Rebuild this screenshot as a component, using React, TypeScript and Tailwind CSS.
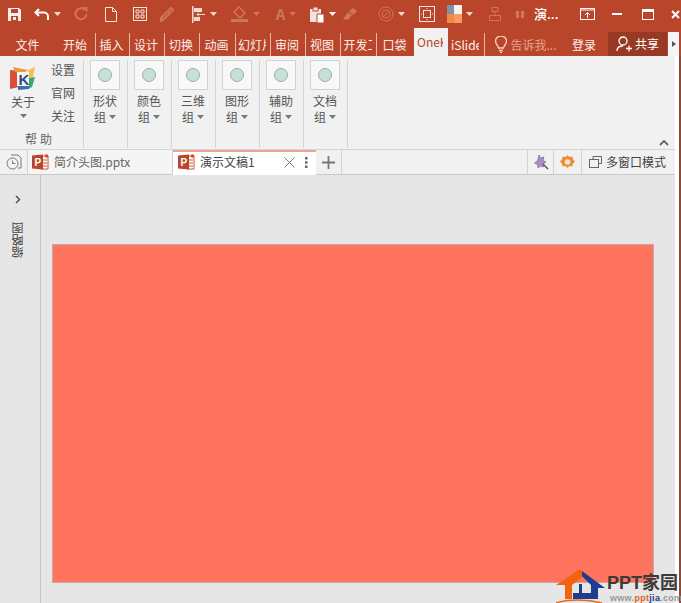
import React from "react";

const font = { fontFamily: '"Microsoft YaHei","Noto Sans CJK SC","Liberation Sans",sans-serif' };

function Caret({ c = "#f3d9d0" }: { c?: string }) {
  return (
    <svg width="7" height="4" viewBox="0 0 7 4" className="shrink-0"><path d="M0 0h7L3.5 4z" fill={c} /></svg>
  );
}

function Cell({ w, children, className = "" }: { w: string; children?: React.ReactNode; className?: string }) {
  return <div className={`flex items-center justify-center gap-1 shrink-0 ${w} ${className}`}>{children}</div>;
}

function TopBar() {
  const dim = "#d0745c";
  return (
    <div className="flex h-[28px] items-center bg-[#b9462b] shrink-0">
      <Cell w="w-[28px]">
        <svg width="15" height="15" viewBox="0 0 15 15"><path d="M1 1h11l2 2v11H1z" fill="#fbeee9" /><path d="M4 2h7v4H4zM4 9h7v5H4z" fill="#b9462b" /><path d="M6 10h3v3H6z" fill="#fbeee9" /></svg>
      </Cell>
      <Cell w="w-[38px]">
        <svg width="16" height="13" viewBox="0 0 16 13" fill="none" stroke="#fff" strokeWidth="2"><path d="M5 1 1.5 4.5 5 8M2 4.5h8a4 4 0 0 1 4 4V12" /></svg>
        <Caret />
      </Cell>
      <Cell w="w-[30px]">
        <svg width="14" height="14" viewBox="0 0 14 14" fill="none" stroke={dim} strokeWidth="2"><path d="M11 3a5.5 5.5 0 1 0 1.5 4M9 1h3.500v3.500" /></svg>
      </Cell>
      <Cell w="w-[30px]">
        <svg width="12" height="15" viewBox="0 0 12 15" fill="none" stroke="#f9e3dc"><path d="M.5.500h7l4 4v10H.5zM7.500.500v4h4" /></svg>
      </Cell>
      <Cell w="w-[28px]">
        <svg width="14" height="14" viewBox="0 0 14 14" fill="none" stroke="#f9e3dc"><rect x=".5" y=".5" width="13" height="13" /><path d="M3 3h3v3H3zM8 3h3v3H8zM3 8h3v3H3zM8 8h3v3H8z" /></svg>
      </Cell>
      <Cell w="w-[26px]">
        <svg width="14" height="15" viewBox="0 0 14 15" fill="none" stroke={dim} strokeWidth="2"><path d="M1 14l2-1 7-7-2-2-7 7zM9 3l2-2 2 2-2 2" /></svg>
      </Cell>
      <Cell w="w-[47px]">
        <svg width="15" height="17" viewBox="0 0 15 17"><path d="M1 0h1.500v17H1z" fill="#f3d9d0" /><path d="M3 2h8v4H3zM3 11h6v4H3z" fill="#f3d9d0" /><path d="M14 8.500H6M8 6.500l-2 2 2 2" stroke="#f3d9d0" fill="none" /></svg>
        <Caret />
      </Cell>
      <Cell w="w-[36px]">
        <svg width="19" height="16" viewBox="0 0 19 16"><path d="M9 1l6 6-5 5-6-6z" fill="none" stroke={dim} strokeWidth="1.500" /><path d="M1 13h17v3H1z" fill={dim} /></svg>
        <Caret c={dim} />
      </Cell>
      <Cell w="w-[46px]">
        <span className="text-[15px] text-[#d0745c] font-bold">A</span>
        <Caret c={dim} />
      </Cell>
      <Cell w="w-[27px]">
        <svg width="16" height="17" viewBox="0 0 16 17"><path d="M1 3h11v13H1z" fill="#f3e2dc" /><path d="M4 1h5v4H4z" fill="#f3e2dc" stroke="#b9462b" /><path d="M8 8h7v9H8z" fill="#fff" stroke="#b9462b" /></svg>
        <Caret c="#fff" />
      </Cell>
      <Cell w="w-[28px]">
        <svg width="16" height="14" viewBox="0 0 16 14"><path d="M1 12l5-7 4 3-4 5zM7 4l4-3 4 3-4 4z" fill={dim} /></svg>
      </Cell>
      <Cell w="w-[54px]">
        <svg width="16" height="16" viewBox="0 0 16 16" fill="none" stroke={dim}><circle cx="8" cy="8" r="7" /><circle cx="8" cy="8" r="4" /><path d="M5 11l6-6" /></svg>
        <Caret />
      </Cell>
      <Cell w="w-[18px]">
        <svg width="16" height="16" viewBox="0 0 16 16" fill="none" stroke="#f9e3dc"><rect x=".5" y=".5" width="15" height="15" /><rect x="4.500" y="4.500" width="7" height="7" /><path d="M8 2v1M8 13v1M2 8h1M13 8h1" /></svg>
      </Cell>
      <Cell w="w-[48px]">
        <svg width="15" height="18" viewBox="0 0 15 18"><path d="M0 0h7v9H0z" fill="#7d92a6" /><path d="M7 0h8v9H7z" fill="#f3f3f3" /><path d="M0 9h7v9H0z" fill="#f08a4b" /><path d="M7 9h8v9H7z" fill="#f79a5e" /></svg>
        <Caret />
      </Cell>
      <Cell w="w-[22px]">
        <svg width="12" height="14" viewBox="0 0 12 14" fill="none" stroke={dim}><path d="M3 .500h6v4H3zM.5 8.500h11v5H.5zM6 4v4" /></svg>
      </Cell>
      <Cell w="w-[28px]">
        <svg width="8" height="7" viewBox="0 0 8 7"><path d="M0 0h3v7H0zM5 0h3v7H5z" fill={dim} /></svg>
      </Cell>
      <Cell w="w-[38px]" className="justify-start! text-[13px] text-white font-medium">演...</Cell>
      <Cell w="w-[30px]">
        <svg width="15" height="12" viewBox="0 0 15 12" fill="none" stroke="#fff"><rect x=".5" y=".5" width="14" height="11" /><path d="M1 2h13M7.500 10V5M5 7l2.500-2.500L10 7" /></svg>
      </Cell>
      <Cell w="w-[30px]"><div className="h-[2px] w-[10px] bg-white" /></Cell>
      <Cell w="w-[32px]">
        <div className="h-[11px] w-[12px] border border-t-[3px] border-white" />
      </Cell>
      <Cell w="w-[22px]">
        <svg width="9" height="9" viewBox="0 0 9 9" stroke="#fff" strokeWidth="2"><path d="M1 1l7 7M8 1L1 8" /></svg>
      </Cell>
    </div>
  );
}

function TabItem({ w, label, sep = true, clip = false }: { w: string; label: string; sep?: boolean; clip?: boolean }) {
  return (
    <div className={`flex items-center justify-center pr-[2px] h-[23px] shrink-0 whitespace-nowrap text-[12px] text-[#fdf1ec] ${w} ${sep ? "border-r border-[#eab9a9]" : ""}`}>
      {clip ? <div className="w-[28px] overflow-hidden">{label}</div> : label}
    </div>
  );
}

function TabsRow() {
  return (
    <div className="flex h-[28px] items-end bg-[#b9462b] shrink-0">
      <TabItem w="w-[57px]" label="文件" sep={false} />
      <TabItem w="w-[39px]" label="开始" />
      <TabItem w="w-[34px]" label="插入" />
      <TabItem w="w-[35px]" label="设计" />
      <TabItem w="w-[35px]" label="切换" />
      <TabItem w="w-[36px]" label="动画" />
      <TabItem w="w-[35px]" label="幻灯片放映" clip />
      <TabItem w="w-[35px]" label="审阅" />
      <TabItem w="w-[35px]" label="视图" />
      <TabItem w="w-[36px]" label="开发工具" clip />
      <TabItem w="w-[37px]" label="口袋" sep={false} />
      <div className="flex h-[28px] w-[34px] shrink-0 items-center bg-[#f1f1f1] pl-[3px] text-[12px] text-[#b9462b]">
        <div className="w-[26px] overflow-hidden whitespace-nowrap">OneKey</div>
      </div>
      <TabItem w="w-[37px]" label="iSlide" clip />
      <div className="flex h-[23px] w-[82px] items-center justify-center gap-[3px] shrink-0 text-[12px] text-[#e6a48e]">
        <svg width="12" height="17" viewBox="0 0 12 17" fill="none" stroke="#f6d3c6" strokeWidth="1.300"><path d="M3.500 12c0-2-3-3.500-3-7a5.500 5 0 0 1 11 0c0 3.500-3 5-3 7zM4 14.500h4M5 16.300h2" /></svg>
        告诉我...
      </div>
      <div className="flex h-[23px] w-[34px] items-center justify-center text-[12px] text-[#fdf1ec] shrink-0">登录</div>
      <div className="ml-[7px] flex h-[24px] w-[59px] shrink-0 items-center justify-center gap-[3px] bg-[#983a23] text-[12px] text-white">
        <svg width="16" height="16" viewBox="0 0 16 16" fill="none" stroke="#fff" strokeWidth="1.300"><circle cx="7" cy="5" r="4" /><path d="M1 15c0-3 2-5 6-5M10 12.500h6M13 9.500v6" /></svg>
        共享
      </div>
      <div className="ml-[1px] flex h-[24px] w-[11px] shrink-0 items-center justify-center bg-[#f5f5f5]">
        <svg width="4" height="6" viewBox="0 0 4 6"><path d="M0 0l4 3-4 3z" fill="#555" /></svg>
      </div>
    </div>
  );
}

function RibbonGroup({ a, b }: { a: string; b: string }) {
  return (
    <div className="flex w-[44px] shrink-0 flex-col items-center border-r border-[#d4d4d4] pr-[1px] h-[88px] text-[12px] leading-[15px] text-[#555]">
      <div className="flex h-[30px] w-[30px] items-center justify-center border border-[#d2d2d2] bg-[#f8f8f8]">
        <div className="h-[14px] w-[14px] rounded-full border border-[#8fb3a5] bg-[#c9e0d6]" />
      </div>
      <div className="mt-[3px]">{a}</div>
      <div className="flex items-center gap-[3px] mt-[1px]">{b}<Caret c="#777" /></div>
    </div>
  );
}

function Ribbon() {
  return (
    <div className="flex h-[94px] shrink-0 bg-[#f1f1f1] pt-[4px] border-b border-[#d6d6d6]">
      <div className="flex w-[84px] shrink-0 flex-col border-r border-[#d4d4d4] h-[88px] text-[12px] text-[#555]">
        <div className="flex h-[69px]">
          <div className="flex w-[46px] flex-col items-center">
            <svg width="28" height="24" viewBox="0 0 28 24" className="mt-[6px]">
              <path d="M1 4l10 1-1 16-9 2z" fill="#d9503a" />
              <path d="M4 1l15 3-4 3-9-1z" fill="#ef9a3a" />
              <path d="M19 4l7-3-2 10-4 1z" fill="#f2c14e" />
              <path d="M20 12l6-1-3 10-4 2z" fill="#3aa76d" />
              <path d="M9 20l11-1 0 4-11 1z" fill="#3b6fb5" />
              <path d="M8 6h12v14H8z" fill="#f4f4f4" />
              <text x="9.500" y="18.500" fontSize="15" fontWeight="700" fill="#2f4b7c" style={{ fontFamily: '"Liberation Sans",sans-serif' }}>K</text>
            </svg>
            <div className="mt-[5px] leading-[14px]">关于</div>
            <div className="mt-[5px]"><Caret c="#777" /></div>
          </div>
          <div className="ml-[5px] flex flex-col items-center gap-[7px] pt-[2px] leading-[16px]">
            <span>设置</span><span>官网</span><span>关注</span>
          </div>
        </div>
        <div className="mt-[3px] w-[80px] text-center text-[12px] tracking-[3px] text-[#666]">帮助</div>
      </div>
      <RibbonGroup a="形状" b="组" />
      <RibbonGroup a="颜色" b="组" />
      <RibbonGroup a="三维" b="组" />
      <RibbonGroup a="图形" b="组" />
      <RibbonGroup a="辅助" b="组" />
      <RibbonGroup a="文档" b="组" />
      <div className="flex flex-1 items-end justify-end pr-[6px] pb-[3px]">
        <svg width="10" height="6" viewBox="0 0 10 6" fill="none" stroke="#666" strokeWidth="1.800"><path d="M1 5l4-4 4 4" /></svg>
      </div>
    </div>
  );
}

function PIcon() {
  return (
    <svg width="17" height="16" viewBox="0 0 17 16" className="shrink-0">
      <path d="M9 2h7v13H9z" fill="#fff" stroke="#c8553a" />
      <path d="M11 6h4M11 9h4M11 12h4" stroke="#c8553a" />
      <circle cx="14.500" cy="2" r="1.800" fill="#d04a2c" />
      <path d="M0 1.500l11-1v15l-11-1z" fill="#b9462b" />
      <text x="2.500" y="12" fontSize="10" fontWeight="700" fill="#fff" style={{ fontFamily: '"Liberation Sans",sans-serif' }}>P</text>
    </svg>
  );
}

function TabStrip() {
  return (
    <div className="flex h-[25px] shrink-0 bg-[#f1f1f1] border-b border-[#c9c9c9]">
      <div className="flex w-[27px] shrink-0 items-center justify-center">
        <svg width="16" height="16" viewBox="0 0 16 16" fill="none" stroke="#777"><path d="M5 1h7l3 3v10H12" /><circle cx="6.500" cy="9.500" r="5.500" fill="#f1f1f1" /><path d="M6.500 6.500v3h3" /></svg>
      </div>
      <div className="flex w-[146px] shrink-0 items-center gap-[5px] border-x border-[#d2d2d2] bg-[#f5f5f5] pl-[4px] pb-[1px] text-[12px] text-[#666]">
        <PIcon />简介头图.pptx
      </div>
      <div className="flex h-[26px] w-[143px] shrink-0 items-center gap-[5px] border-t-2 border-[#e9a58c] bg-white pl-[5px] pb-[4px] text-[12px] text-[#444]">
        <PIcon />
        <span className="w-[79px] whitespace-nowrap">演示文稿1</span>
        <svg width="11" height="11" viewBox="0 0 11 11" stroke="#777"><path d="M.5.500l10 10M10.500.500l-10 10" /></svg>
        <svg width="3" height="11" viewBox="0 0 3 11" className="ml-[5px]"><path d="M0 0h2.500v2.500H0zM0 4.250h2.500v2.500H0zM0 8.500h2.500V11H0z" fill="#666" /></svg>
      </div>
      <div className="flex w-[26px] shrink-0 items-center justify-center border-r border-[#d2d2d2]">
        <svg width="13" height="13" viewBox="0 0 13 13" stroke="#777" strokeWidth="1.800"><path d="M6.500 0v13M0 6.500h13" /></svg>
      </div>
      <div className="flex-1" />
      <div className="flex w-[26px] shrink-0 items-center justify-center border-l border-[#d2d2d2]">
        <svg width="16" height="16" viewBox="0 0 16 16"><path d="M6 1l1.500 3 3.500-1-1 3.500 3 1.500-3 2 .5 3-3-1-2.500 2-.5-3.500-3-1.500 3-2z" fill="#a78fc4" stroke="#6d5a86" strokeWidth=".6" /><path d="M10 10l5 5" stroke="#555" strokeWidth="1.500" /></svg>
      </div>
      <div className="flex w-[28px] shrink-0 items-center justify-center border-l border-[#d2d2d2]">
        <svg width="15" height="15" viewBox="0 0 15 15"><path d="M7.500 0l2 2 2.800-.500.700 2.800 2 2.200-2 2.200-.7 2.800-2.800-.500-2 2-2-2-2.800.500-.7-2.800-2-2.200 2-2.200.7-2.800 2.800.500z" fill="#ea8e3c" /><circle cx="7.500" cy="7" r="2.800" fill="#fbe3cc" /></svg>
      </div>
      <div className="flex w-[94px] shrink-0 items-center gap-[4px] border-l border-[#d2d2d2] pl-[7px] text-[12px] text-[#444]">
        <svg width="13" height="12" viewBox="0 0 13 12" fill="none" stroke="#666"><path d="M4 3V.5h8.500v7H9.500" /><rect x=".5" y="3.500" width="9" height="8" /></svg>
        多窗口模式
      </div>
    </div>
  );
}

function Logo() {
  return (
    <div className="absolute bottom-0 right-[-6px] flex h-[36px] w-[125px] items-start">
      <svg width="52" height="36" viewBox="0 0 52 36" className="shrink-0">
        <path d="M0 18L24 2l5 6-13 10v14H9V18z" fill="#f0640f" />
        <path d="M26 4l23 17h-7v11H17v-6h6v-9h3v9h9V18L26 9z" fill="#1f3d8f" />
        <path d="M0 36c12-4 30-4 46 0" fill="none" stroke="#f0640f" strokeWidth="1.500" />
      </svg>
      <div className="-ml-[1px] flex flex-col pt-[7px] leading-none whitespace-nowrap">
        <span className="text-[18px] font-bold text-[#3b3b3b]" style={{ fontFamily: '"Liberation Sans","Noto Sans CJK SC",sans-serif' }}>PPT家园</span>
        <span className="mt-[2px] ml-[3px] text-[9px] font-bold tracking-[0.3px] text-[#999]" style={{ fontFamily: '"Liberation Sans",sans-serif' }}>www.<span className="text-[#e8641a]">ppt</span><span className="text-[#1f3d8f]">jia</span>.com</span>
      </div>
    </div>
  );
}

function Body() {
  return (
    <div className="relative flex flex-1 min-h-0 bg-[#e6e6e6]">
      <div className="flex w-[41px] shrink-0 flex-col items-center border-r border-[#c6c6c6] pt-[20px] pr-[5px]">
        <svg width="6" height="9" viewBox="0 0 6 9" fill="none" stroke="#555" strokeWidth="1.500"><path d="M1 1l3.500 3.500L1 8" /></svg>
        <span className="mt-[18px] rotate-180 text-[12px] text-[#444] [writing-mode:vertical-rl]">缩略图</span>
      </div>
      <div className="flex-1 pl-[11px] pt-[69px] pb-[21px]">
        <div className="h-[339px] w-[602px] border border-[#c8a9a2] bg-[#ff745e]" />
      </div>
      <Logo />
    </div>
  );
}

export default function App() {
  return (
    <div className="flex h-[603px] w-[681px] flex-col overflow-hidden" style={font}>
      <TopBar />
      <TabsRow />
      <div className="flex min-h-0 flex-1">
        <div className="flex w-[675px] shrink-0 flex-col">
          <Ribbon />
          <TabStrip />
          <Body />
        </div>
        <div className="w-[4px] shrink-0 bg-white" />
        <div className="w-[2px] shrink-0 bg-[#8c4a3a]" />
      </div>
    </div>
  );
}
